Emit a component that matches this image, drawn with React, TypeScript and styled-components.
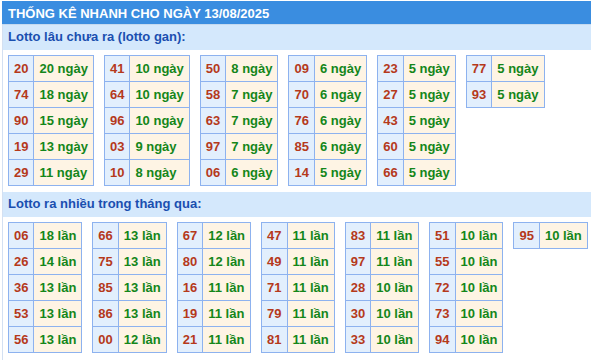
import React from "react";
import styled, { createGlobalStyle } from "styled-components";

const GlobalStyle = createGlobalStyle`
    body {
        margin: 0;
        background: #ffffff;
        font-family: "Liberation Sans", Arial, sans-serif;
    }
`;

const Wrapper = styled.div`
    margin-left: 2px;
    border-left: 1px solid #d3e0f2;
    min-height: 360px;
`;
const Header = styled.div`
    margin-left: -1px;
    height: 24px;
    line-height: 25px;
    padding-left: 6px;
    background-color: #3a8de0;
    color: #ffffff;
    font-weight: bold;
    font-size: 13px;
    border-bottom: 1px solid #c4d9ef;
    box-sizing: border-box;
    margin-top: 1px;
`;
const SubHeader = styled.div`
    height: 25px;
    line-height: 24px;
    padding-left: 5px;
    background-color: #d4e8fc;
    color: #1a4fb0;
    font-weight: bold;
    font-size: 13px;
`;
const TableRow = styled.div`
    display: flex;
    align-items: flex-start;
    gap: 10px;
    padding: 5px 0 6px 5px;
`;
const Table = styled.table`
    border-collapse: collapse;
    font-size: 13px;
    font-weight: bold;
`;
const NumCell = styled.td`
    border: 1px solid #8db2ef;
    background-color: #e2effd;
    color: #b5391b;
    padding: 5px 5px;
    line-height: 15px;
    text-align: center;
`;
const ValueCell = styled.td`
    border: 1px solid #8db2ef;
    background-color: #fef4e4;
    color: #14861a;
    padding: 5px 5px;
    line-height: 15px;
    white-space: nowrap;
`;

type Item = [string, number];

const gan: Item[][] = [
    [["20", 20], ["74", 18], ["90", 15], ["19", 13], ["29", 11]],
    [["41", 10], ["64", 10], ["96", 10], ["03", 9], ["10", 8]],
    [["50", 8], ["58", 7], ["63", 7], ["97", 7], ["06", 6]],
    [["09", 6], ["70", 6], ["76", 6], ["85", 6], ["14", 5]],
    [["23", 5], ["27", 5], ["43", 5], ["60", 5], ["66", 5]],
    [["77", 5], ["93", 5]],
];

const nhieu: Item[][] = [
    [["06", 18], ["26", 14], ["36", 13], ["53", 13], ["56", 13]],
    [["66", 13], ["75", 13], ["85", 13], ["86", 13], ["00", 12]],
    [["67", 12], ["80", 12], ["16", 11], ["19", 11], ["21", 11]],
    [["47", 11], ["49", 11], ["71", 11], ["79", 11], ["81", 11]],
    [["83", 11], ["97", 11], ["28", 10], ["30", 10], ["33", 10]],
    [["51", 10], ["55", 10], ["72", 10], ["73", 10], ["94", 10]],
    [["95", 10]],
];

const Group = ({ items, unit }: { items: Item[]; unit: string }) => (
    <Table>
        <tbody>
            {items.map(([num, count]) => (
                <tr key={num}>
                    <NumCell>{num}</NumCell>
                    <ValueCell>{count} {unit}</ValueCell>
                </tr>
            ))}
        </tbody>
    </Table>
);

const App = () => {
    return (
        <>
            <GlobalStyle />
            <Wrapper>
                <Header>THỐNG KÊ NHANH CHO NGÀY 13/08/2025</Header>
                <SubHeader>Lotto lâu chưa ra (lotto gan):</SubHeader>
                <TableRow>
                    {gan.map((g, i) => (
                        <Group key={i} items={g} unit="ngày" />
                    ))}
                </TableRow>
                <SubHeader>Lotto ra nhiều trong tháng qua:</SubHeader>
                <TableRow>
                    {nhieu.map((g, i) => (
                        <Group key={i} items={g} unit="lần" />
                    ))}
                </TableRow>
            </Wrapper>
        </>
    );
};
export default App;
